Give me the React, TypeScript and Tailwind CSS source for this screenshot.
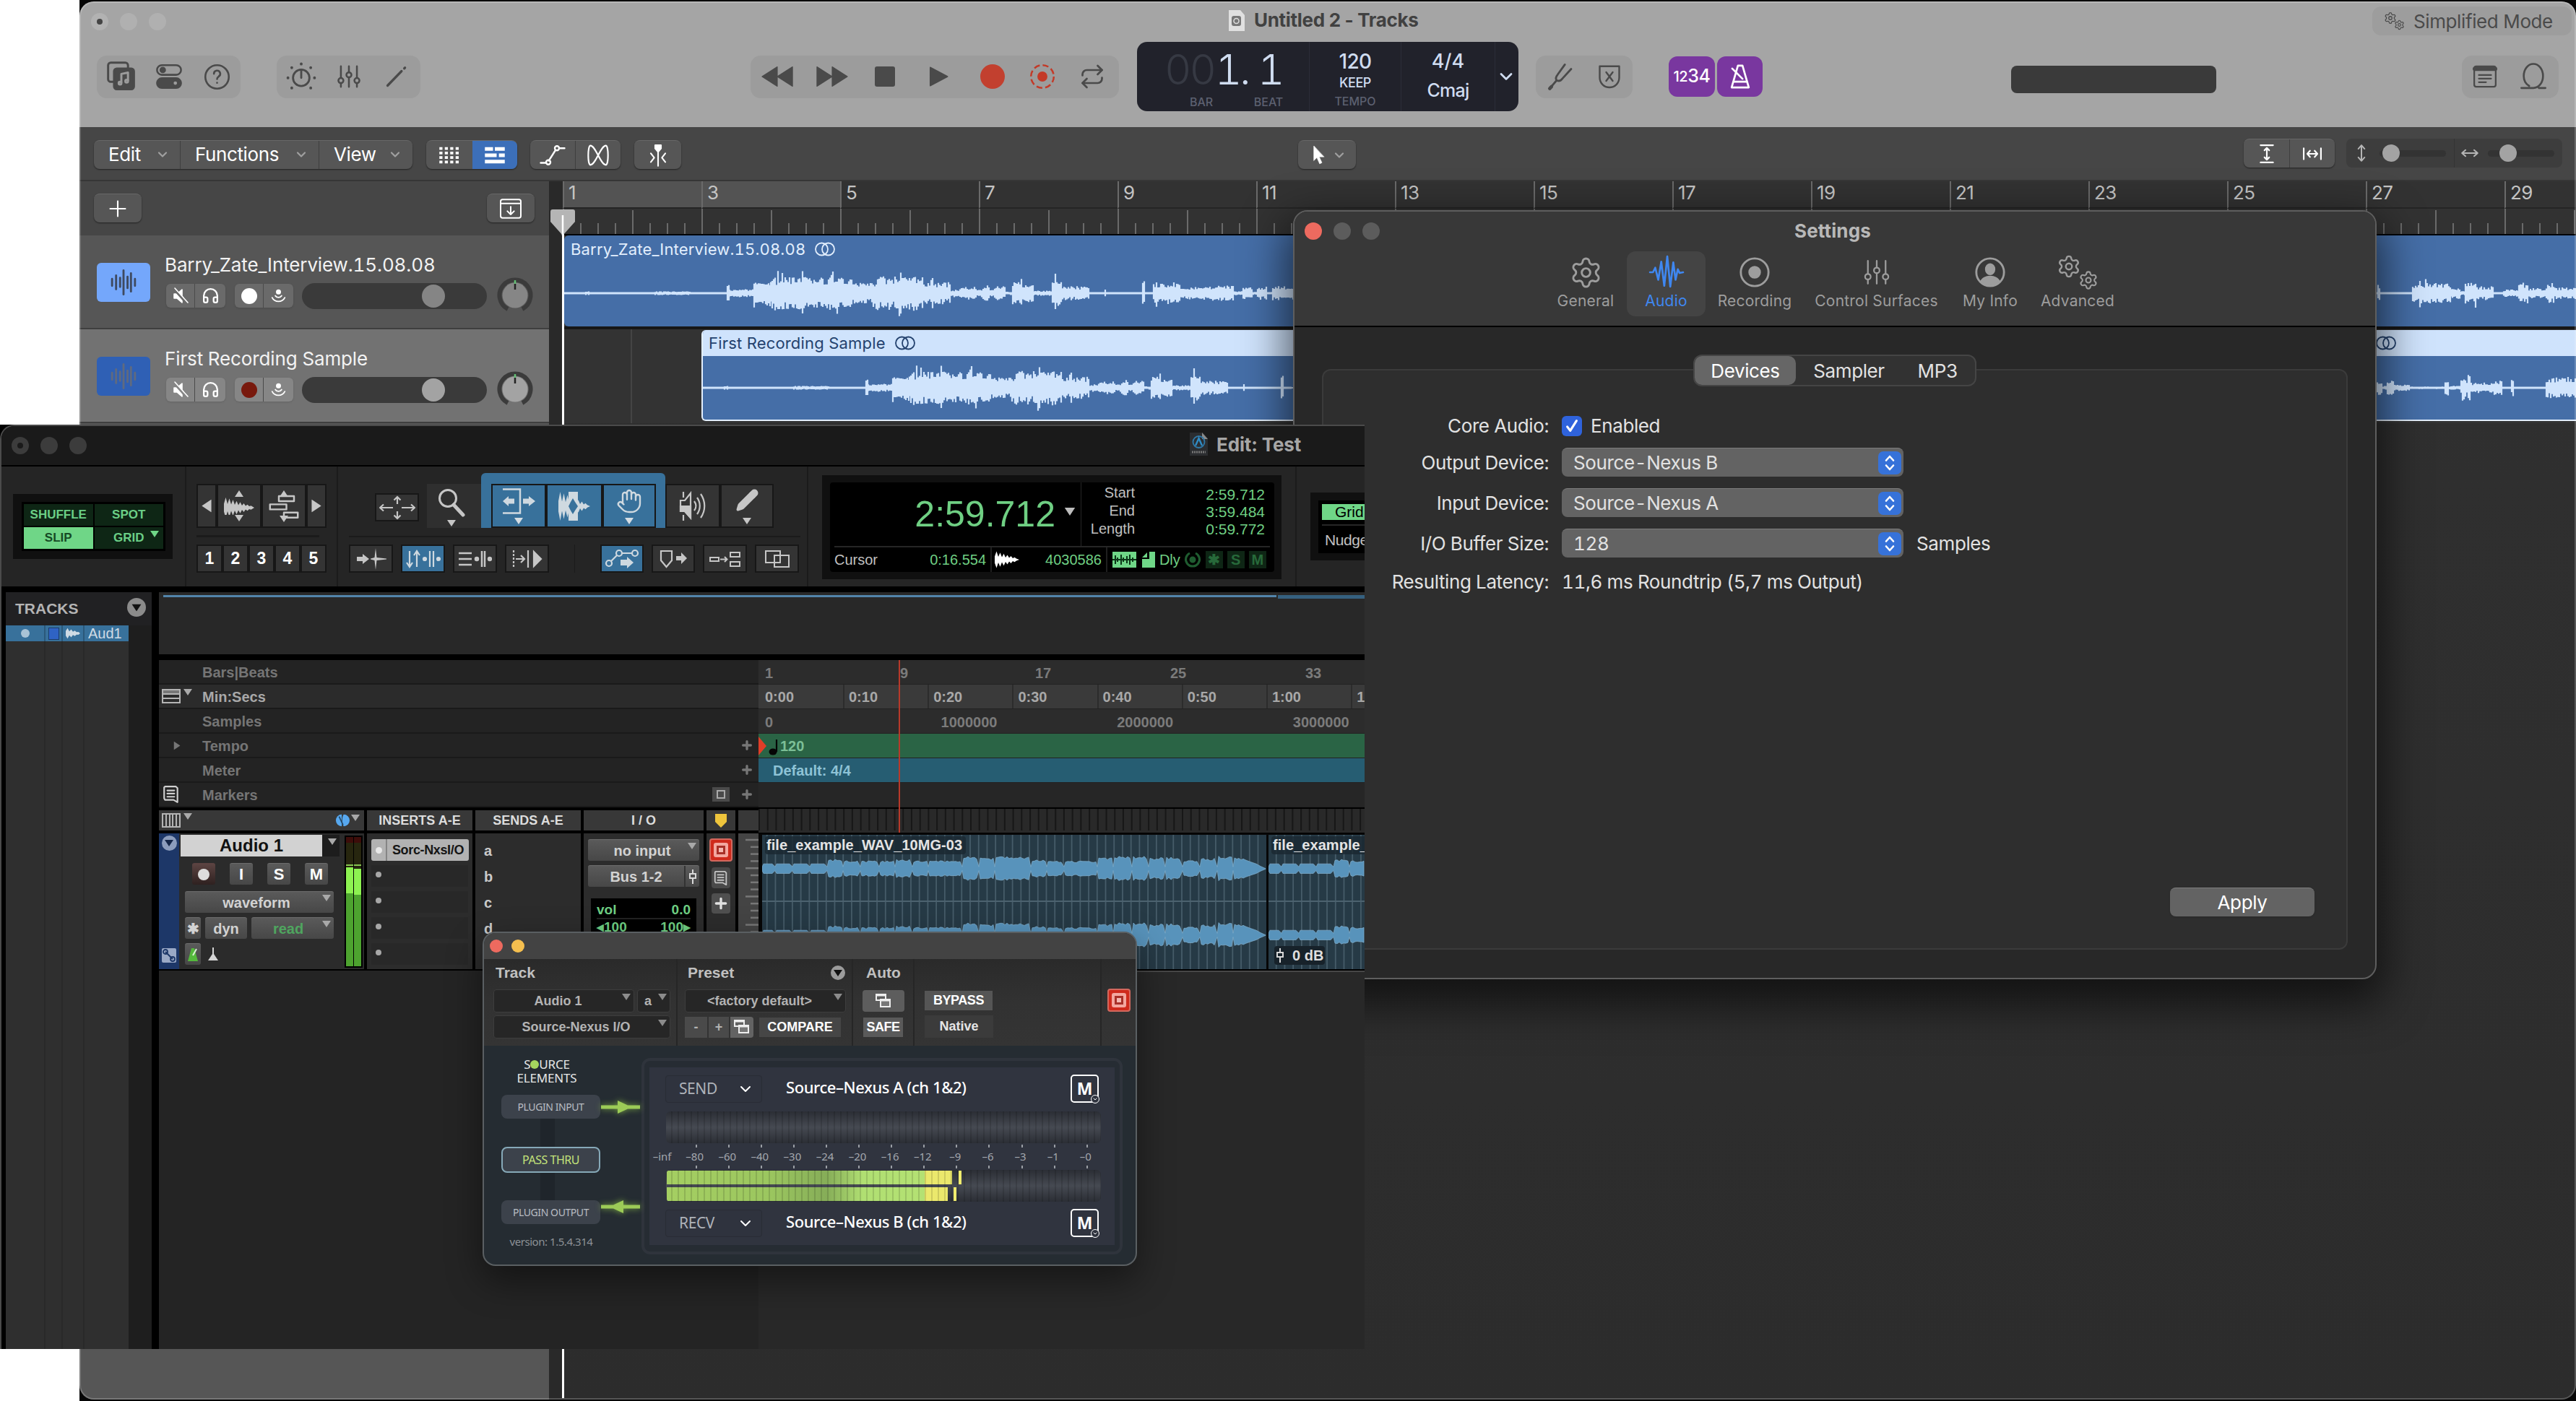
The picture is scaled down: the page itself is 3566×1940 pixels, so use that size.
import type { ReactNode } from "react";
import { clsx, type ClassValue } from "clsx";
import { ChevronDown, Hand, Headphones, Pencil, Repeat, Settings } from "lucide-react";
import { twMerge } from "tailwind-merge";

type Segment = [from: number, to: number, amp: number];

const cn = (...classes: ClassValue[]) => twMerge(clsx(classes));

const noise = (n: number) => {
  const v = Math.sin(n * 12.9898) * 43758.5453;
  return v - Math.floor(v);
};

/* ---------- small shared pieces ---------- */

function Glyph({
  size = 36,
  className,
  fill = "none",
  sw = 1.6,
  children,
}: {
  size?: number;
  className?: string;
  fill?: string;
  sw?: number;
  children: ReactNode;
}) {
  return (
    <svg
      width={size}
      height={size}
      viewBox="0 0 24 24"
      fill={fill}
      stroke="currentColor"
      strokeWidth={sw}
      strokeLinecap="round"
      strokeLinejoin="round"
      className={cn("shrink-0", className)}
    >
      {children}
    </svg>
  );
}

function Caret({ className }: { className?: string }) {
  return (
    <svg width="12" height="9" viewBox="0 0 12 9" className={cn("shrink-0 fill-[#a9a9a9]", className)}>
      <path d="M0 0h12L6 9z" />
    </svg>
  );
}

function Dot({ className }: { className?: string }) {
  return <span className={cn("block shrink-0 rounded-full", className)} />;
}

function Cell({ className, children }: { className?: string; children?: ReactNode }) {
  return <div className={cn("flex items-center justify-center", className)}>{children}</div>;
}

const slidersIcon = (
  <>
    <path d="M5 3v10M5 18v3M12 3v5M12 13v8M19 3v10M19 18v3" />
    <circle cx="5" cy="15.500" r="2.200" />
    <circle cx="12" cy="10.500" r="2.200" />
    <circle cx="19" cy="15.500" r="2.200" />
  </>
);

function TwoGears({ big, small }: { big: number; small: number }) {
  return (
    <span className="flex items-start">
      <Settings size={big} strokeWidth={1.7} />
      <Settings size={small} strokeWidth={1.8} className="-ml-1 mt-[38%]" />
    </span>
  );
}

/* ---------- Logic window ---------- */

function PillGroup({ className, children }: { className?: string; children: ReactNode }) {
  return (
    <div className={cn("flex h-[59px] items-center rounded-[14px] bg-[#9c9c9c] text-[#4a4a4a]", className)}>
      {children}
    </div>
  );
}

function LogicHeader() {
  return (
    <header className="h-[174px] bg-[#a5a5a5]">
      <div className="flex h-[50px]">
        <div className="flex w-[1589px] gap-4 pl-4 pt-4">
          <Cell className="size-6 rounded-full bg-[#b2b2b2]">
            <Dot className="size-2 bg-[#444]" />
          </Cell>
          <Dot className="size-6 bg-[#b0b0b0]" />
          <Dot className="size-6 bg-[#b0b0b0]" />
        </div>
        <div className="flex w-[1585px] gap-3 pt-[10px]">
          <svg width="25" height="29" viewBox="0 0 25 29" className="mt-[2px]">
            <path d="M2 0h16l6 7v22H2z" fill="#e0e0e0" />
            <rect x="6" y="8" width="13" height="14" rx="3" fill="#777" />
            <circle cx="12.500" cy="15" r="3.500" fill="none" stroke="#ddd" strokeWidth="1.500" />
          </svg>
          <span className="text-[26px] font-bold leading-8 tracking-[-0.012em] text-[#414141]">
            Untitled 2 - Tracks
          </span>
        </div>
        <div className="mt-[7px] flex h-10 w-[276px] items-center gap-3 rounded-xl bg-[#9d9d9d] pl-4 text-[#4a4a4a]">
          <TwoGears big={18} small={15} />
          <span className="whitespace-nowrap text-[26px] tracking-[-0.015em]">Simplified Mode</span>
        </div>
      </div>

      <div className="mt-[6px] flex h-24 items-center">
        <PillGroup className="ml-6 w-[199px]">
          <Cell className="w-[67px]">
            <Glyph size={44}>
              <rect x="2" y="1.500" width="15" height="14.500" rx="2" />
              <rect x="6.500" y="6" width="15" height="15.500" rx="2" fill="currentColor" />
              <path d="M12 16.500V10l5-1v6" stroke="#9c9c9c" />
              <circle cx="11" cy="17" r="1" stroke="#9c9c9c" />
              <circle cx="16" cy="15.500" r="1" stroke="#9c9c9c" />
            </Glyph>
          </Cell>
          <Cell className="w-[66px]">
            <Glyph size={38}>
              <rect x="1.500" y="2" width="21" height="8.500" rx="4.250" />
              <circle cx="6.500" cy="6.250" r="2" fill="currentColor" />
              <rect x="1.500" y="13.500" width="21" height="8.500" rx="4.250" fill="currentColor" />
              <circle cx="17.500" cy="17.750" r="2.300" fill="#9c9c9c" />
            </Glyph>
          </Cell>
          <Cell className="w-[66px]">
            <Glyph size={39}>
              <circle cx="12" cy="12" r="10" />
              <path d="M9.300 9.300a2.700 2.700 0 1 1 4 2.400c-1 .6-1.300 1.100-1.300 2.100M12 16.900v.1" />
            </Glyph>
          </Cell>
        </PillGroup>
        <PillGroup className="ml-[50px] w-[199px]">
          <Cell className="w-[67px]">
            <Glyph size={42}>
              <circle cx="12" cy="13" r="6.500" />
              <path d="M12 7v6" />
              <path
                d="M12 2v.1M4.500 4.900v.1M19.500 4.900v.1M1.500 13v.1M22.500 13v.1M4.500 21v.1M19.500 21v.1"
                strokeWidth="2.200"
              />
            </Glyph>
          </Cell>
          <Cell className="w-[66px]">
            <Glyph size={38}>{slidersIcon}</Glyph>
          </Cell>
          <Cell className="w-[66px]">
            <Glyph size={30} sw={2.600}>
              <path d="M2 22 17.500 6M20.500 3l.8-.8" />
            </Glyph>
          </Cell>
        </PillGroup>

        <PillGroup className="ml-[457px] w-[510px]">
          <Cell className="w-[74px]">
            <Glyph size={46} fill="currentColor" sw={0.6}>
              <path d="M12 5v14L1 12zM23 5v14L12 12z" />
            </Glyph>
          </Cell>
          <Cell className="w-[77px]">
            <Glyph size={46} fill="currentColor" sw={0.6}>
              <path d="M12 5v14l11-7zM1 5v14l11-7z" />
            </Glyph>
          </Cell>
          <Cell className="w-[69px]">
            <span className="block h-[28px] w-[28px] rounded-[3px] bg-[#4a4a4a]" />
          </Cell>
          <Cell className="w-[79px]">
            <Glyph size={34} fill="currentColor" sw={1}>
              <path d="M4 3v18l17-9z" />
            </Glyph>
          </Cell>
          <Cell className="w-[71px]">
            <Dot className="size-[34px] bg-[#c2402f]" />
          </Cell>
          <Cell className="w-[68px] text-[#c33a28]">
            <Glyph size={38}>
              <circle cx="12" cy="12" r="10" strokeDasharray="5.200 2.650" strokeLinecap="butt" />
              <circle cx="12" cy="12" r="3.600" fill="currentColor" />
            </Glyph>
          </Cell>
          <Cell className="w-[70px]">
            <Repeat size={36} strokeWidth={1.8} />
          </Cell>
        </PillGroup>

        <div className="ml-[25px] flex h-24 w-[528px] rounded-[14px] bg-[#21222b] text-[#cfdcf0]">
          <div className="w-[239px] border-r border-[#2b2d38]">
            <div className="flex h-[70px] items-end pl-[38px] text-[58px] font-light leading-[64px] tabular-nums">
              <span className="w-[70px] tracking-[-0.05em] text-[#363943]">00</span>
              <span className="w-[34px] text-center">1</span>
              <span className="w-[15px]">.</span>
              <span className="ml-[10px] w-[34px] text-center">1</span>
            </div>
            <div className="mt-[3px] flex text-[16px] font-medium leading-5 text-[#5c6070]">
              <span className="w-[178px] text-center">BAR</span>
              <span className="-ml-[18px] w-11 text-center">BEAT</span>
            </div>
          </div>
          <div className="flex w-[127px] flex-col items-center border-r border-[#2b2d38] pt-[9px] font-medium">
            <span className="text-[28px] leading-9 tracking-tight">120</span>
            <span className="text-[18px] leading-6 tracking-tight">KEEP</span>
            <span className="mt-[3px] text-[16px] leading-5 text-[#5c6070]">TEMPO</span>
          </div>
          <div className="flex w-[130px] flex-col items-center border-r border-[#2b2d38] pt-[9px] font-medium">
            <span className="text-[27px] leading-9">4/4</span>
            <span className="text-[25px] leading-[44px] tracking-[-0.03em]">Cmaj</span>
          </div>
          <Cell className="w-[30px]">
            <ChevronDown size={28} strokeWidth={2.4} />
          </Cell>
        </div>

        <PillGroup className="ml-6 w-[134px] justify-around">
          <Glyph size={42}>
            <path d="M3 21.500 8.500 15c-1-1.500-.5-3 .7-4.400L15 2.500M8.500 15c1.700.9 3.300.3 4.400-1.200L20 6" />
            <path d="m3 21.500 1.500-1.600" strokeWidth="2.600" />
          </Glyph>
          <Glyph size={36}>
            <path d="M3 2.500h18V13c0 5-4 9-9 9s-9-4-9-9z" />
            <path d="m9 8 6 8M15 8l-6 8" />
          </Glyph>
        </PillGroup>

        <div className="ml-[50px] flex gap-[3px] text-white">
          <Cell className="h-14 w-16 rounded-xl bg-[#79379f] font-medium tracking-tight">
            <span className="text-[20px]">12</span>
            <span className="text-[25px]">34</span>
          </Cell>
          <Cell className="h-14 w-[63px] rounded-xl bg-[#79379f]">
            <Glyph size={38} sw={1.7}>
              <path d="M10 2.500h4l5.500 19h-15zM6 16.500h12M14 14 5 5" />
            </Glyph>
          </Cell>
        </div>

        <div className="ml-[344px] mt-2 h-[38px] w-[284px] rounded-lg bg-[#3a3a3a]" />

        <PillGroup className="ml-[340px] w-[134px] justify-around">
          <Glyph size={34}>
            <rect x="1.500" y="2" width="21" height="20" rx="2" />
            <path d="M2 4.500h20" strokeWidth="4" />
            <path d="M6 10.500h12M6 14h12M6 17.500h7" />
          </Glyph>
          <Glyph size={40}>
            <path d="M8.500 19.800C5.500 18 4 15 4 11.500 4 6 7.500 1.500 12 1.500s8 4.500 8 10-3.500 10-8 10H2M16.500 21.500H22" />
          </Glyph>
        </PillGroup>
      </div>
    </header>
  );
}

function ToolButton({ className, children }: { className?: string; children: ReactNode }) {
  return (
    <div
      className={cn(
        "flex h-10 items-center justify-center rounded-lg border-t border-[#686868] bg-[#565656] text-white shadow-[0_1px_2px_rgba(0,0,0,0.5)]",
        className,
      )}
    >
      {children}
    </div>
  );
}

const menus = [
  { label: "Edit", width: "w-[119px]" },
  { label: "Functions", width: "w-[192px]" },
  { label: "View", width: "w-[130px]" },
];

function ZoomSlider({ vertical }: { vertical?: boolean }) {
  return (
    <div className={cn("flex flex-1 items-center pl-2", vertical && "border-r border-[#333]")}>
      <Glyph size={26} className={cn("text-[#b5b5b5]", !vertical && "rotate-90")} sw={1.8}>
        <path d="M12 2v20M8 6.500 12 2l4 4.500M8 17.500l4 4.500 4-4.500" />
      </Glyph>
      <div className="ml-3 flex h-[9px] w-[92px] items-center rounded-full bg-[#333]">
        <Dot className={cn("size-6 bg-[#a3a3a3]", vertical ? "ml-1" : "ml-4")} />
      </div>
    </div>
  );
}

function LogicMenuBar() {
  return (
    <div className="flex h-[75px] items-start border-b-2 border-[#363636] bg-[#464646] pt-[18px]">
      <ToolButton className="ml-5 w-[441px]">
        {menus.map((menu, i) => (
          <div
            key={menu.label}
            className={cn(
              "flex h-full items-center justify-between pb-[2px] pl-5 pr-[14px] text-[26px] tracking-[-0.015em]",
              i > 0 && "border-l border-[#3f3f3f]",
              menu.width,
            )}
          >
            {menu.label}
            <ChevronDown size={20} strokeWidth={2.6} className="text-[#a0a0a0]" />
          </div>
        ))}
      </ToolButton>
      <ToolButton className="ml-[19px] w-[126px] overflow-hidden">
        <Cell className="h-full w-16">
          <Glyph size={30} fill="currentColor" sw={0}>
            {[3, 8, 13, 18].flatMap((y) =>
              [1, 7, 13, 19].map((x) => <rect key={`${x}-${y}`} x={x} y={y} width="3.400" height="3" />),
            )}
          </Glyph>
        </Cell>
        <Cell className="h-full w-[62px] bg-[#3c6fb9]">
          <Glyph size={30} fill="currentColor" sw={0}>
            <path d="M1 3h9v4H1zM12 3h11v4H12zM1 10h13v4H1zM16.500 10H23v4h-6.500zM1 17h22v4H1z" />
          </Glyph>
        </Cell>
      </ToolButton>
      <ToolButton className="ml-[18px] w-[125px]">
        <Cell className="h-full w-[63px] border-r border-[#3f3f3f]">
          <Glyph size={36}>
            <path d="M1 19h5M8.500 17 14.500 7.500M18 5.500h5" />
            <circle cx="8" cy="18.500" r="2" />
            <circle cx="16" cy="5.500" r="2" />
          </Glyph>
        </Cell>
        <Cell className="h-full w-[62px]">
          <Glyph size={32}>
            <path d="M4 2c5.500 0 10.500 20 16 20 3 0 3-20 0-20-5.500 0-10.500 20-16 20C1 22 1 2 4 2z" />
          </Glyph>
        </Cell>
      </ToolButton>
      <ToolButton className="ml-[19px] w-[65px]">
        <Glyph size={32}>
          <path d="M12 8v15M4.500 10 8 14.500 4.500 19M19.500 10 16 14.500l3.500 4.500" />
          <path d="M9 1.500h6V5l-3 3.500L9 5z" fill="currentColor" />
        </Glyph>
      </ToolButton>
      <ToolButton className="ml-[854px] w-20 gap-2">
        <Glyph size={26} fill="currentColor" sw={0.5}>
          <path d="M8 0v19l4-4 3.500 8 3-1.500L15 14h6z" />
        </Glyph>
        <ChevronDown size={20} strokeWidth={2.6} className="text-[#a0a0a0]" />
      </ToolButton>
      <ToolButton className="-mt-[2px] ml-[1229px] w-[126px]">
        <Cell className="h-full w-[63px] border-r border-[#3f3f3f]">
          <Glyph size={26} sw={2}>
            <path d="M4 1h16M4 23h16M12 4.500v15M9 7.500l3-3 3 3M9 16.500l3 3 3-3" />
          </Glyph>
        </Cell>
        <Cell className="h-full w-[62px]">
          <Glyph size={26} sw={2} className="rotate-90">
            <path d="M5 1h14M5 23h14M12 5.500v13M8 9l4-3.500L16 9M8 15l4 3.500 4-3.500" />
          </Glyph>
        </Cell>
      </ToolButton>
      <div className="-mt-[2px] ml-4 flex h-10 w-[299px] rounded-lg bg-[#3d3d3d]">
        <ZoomSlider vertical />
        <ZoomSlider />
      </div>
    </div>
  );
}

function TrackHeader({ name, selected }: { name: string; selected?: boolean }) {
  const button = selected ? "bg-[#868686]" : "bg-[#6a6a6a]";
  return (
    <div
      className={cn("flex h-[130px] border-b-2 border-[#3f3f3f] pl-6", selected ? "bg-[#727272]" : "bg-[#565656]")}
    >
      <Cell className={cn("mt-[38px] h-[54px] w-[74px] rounded-md", selected ? "bg-[#2f60b5]" : "bg-[#74a7fb]")}>
        <Glyph size={38} sw={1.8} className={selected ? "text-[#5f6a80]" : "text-[#3e4a60]"}>
          <path d="M2 9v6M5.500 6v12M9 8v8M12 1.500v21M15.500 7v10M18.500 4v16M22 9v6" />
        </Glyph>
      </Cell>
      <div className="ml-5 w-[446px]">
        <div className="mt-6 whitespace-nowrap text-[26px] leading-[34px] tabular-nums tracking-[-0.005em] text-[#f2f2f2]">
          {name}
        </div>
        <div className="mt-[7px] flex h-[37px] items-center text-white">
          <div className={cn("ml-[2px] flex h-[33px] w-[82px] rounded-md shadow", button)}>
            <Cell className="w-10 border-r border-[#4a4a4a]">
              <Glyph size={24} fill="currentColor" sw={1.6}>
                <path d="M3 9h4l7-6v18l-7-6H3z" />
                <path d="m3 2 18 20" stroke={selected ? "#868686" : "#6a6a6a"} strokeWidth="4" />
                <path d="m4 1 18 20" />
              </Glyph>
            </Cell>
            <Cell className="w-[42px]">
              <Headphones size={25} strokeWidth={2.2} />
            </Cell>
          </div>
          <div className={cn("ml-[13px] flex h-[33px] w-[81px] rounded-md shadow", button)}>
            <Cell className="w-10 border-r border-[#4a4a4a]">
              <Dot className={cn("size-[22px]", selected ? "bg-[#78190d]" : "bg-white")} />
            </Cell>
            <Cell className="w-[41px]">
              <Glyph size={21} sw={2}>
                <circle cx="12" cy="6" r="3" fill="currentColor" />
                <path d="M7 12c2 3.500 8 3.500 10 0M2 15c4 8 16 8 20 0" />
              </Glyph>
            </Cell>
          </div>
          <div className="ml-3 flex h-9 w-[256px] items-center rounded-full bg-[#3a3a3a] pl-[166px]">
            <Dot className={cn("size-8", selected ? "bg-[#a3a3a3]" : "bg-[#858585]")} />
          </div>
        </div>
      </div>
      <div className="ml-[13px] mt-[57px]">
        <svg width="52" height="52" viewBox="0 0 52 52">
          <path d="M16 45A21.500 21.500 0 1 1 36 45" fill="none" stroke="#3b3b3b" strokeWidth="6" />
          <circle cx="26" cy="26" r="17.500" fill={selected ? "#a3a3a3" : "#868686"} />
          <path d="M26 10v8" stroke="#222" strokeWidth="2.500" />
          <path d="M26 5v5" stroke="#63c074" strokeWidth="2.500" />
        </svg>
      </div>
    </div>
  );
}

// x offsets are relative to the start of the recording
const interviewWave: Segment[] = [
  [0, 30, 1],
  [30, 36, 3],
  [36, 126, 1],
  [126, 176, 3],
  [176, 226, 1],
  [226, 229, 16],
  [229, 263, 6],
  [263, 286, 20],
  [286, 350, 25],
  [350, 400, 24],
  [400, 432, 17],
  [432, 494, 26],
  [494, 536, 17],
  [536, 550, 6],
  [550, 572, 10],
  [572, 580, 6],
  [580, 590, 12],
  [590, 596, 5],
  [596, 612, 11],
  [612, 621, 3],
  [621, 635, 17],
  [635, 650, 14],
  [650, 676, 4],
  [676, 690, 22],
  [690, 728, 11],
  [728, 749, 1],
  [749, 751, 8],
  [751, 801, 1],
  [801, 804, 24],
  [804, 816, 1],
  [816, 853, 17],
  [853, 864, 9],
  [864, 882, 11],
  [882, 928, 12],
  [928, 940, 3],
  [940, 954, 10],
  [954, 960, 3],
  [960, 974, 10],
  [974, 981, 2],
  [981, 1010, 11],
];

const interviewTail: Segment[] = [
  [2500, 2511, 1],
  [2511, 2515, 14],
  [2515, 2559, 1],
  [2559, 2612, 16],
  [2612, 2625, 9],
  [2625, 2632, 4],
  [2632, 2650, 16],
  [2650, 2672, 11],
  [2672, 2685, 2],
  [2685, 2706, 6],
  [2706, 2720, 16],
  [2720, 2746, 8],
  [2746, 2756, 16],
  [2756, 2788, 9],
];

const sampleTail: Segment[] = [
  [2316, 2326, 12],
  [2326, 2332, 3],
  [2332, 2342, 12],
  [2342, 2364, 5],
  [2364, 2412, 2],
  [2412, 2418, 12],
  [2418, 2434, 3],
  [2434, 2448, 14],
  [2448, 2476, 8],
  [2476, 2492, 11],
  [2492, 2504, 1],
  [2504, 2507, 13],
  [2507, 2552, 1],
  [2552, 2600, 16],
];

function barsPath(segments: Segment[], mid: number) {
  let d = "";
  for (const [from, to, amp] of segments) {
    for (let x = from; x < to; x += 2) {
      const spike = amp > 12 && noise(x) > 0.88 ? 1.45 : 1;
      const up = Math.max(1.5, amp * (0.45 + 0.45 * noise(x + 3)) * spike);
      const down = Math.max(1.5, amp * (0.45 + 0.45 * noise(x + 11)) * spike);
      d += `M${x} ${(mid - up).toFixed(1)}V${(mid + down).toFixed(1)}`;
    }
  }
  return d;
}

function LogicWave({ segments }: { segments: Segment[] }) {
  return (
    <svg width="2790" height="88" className="block shrink-0">
      <path d={barsPath(segments, 44)} stroke="#d0e4fc" strokeWidth="2.200" fill="none" />
      <path d="M0 44H2790" stroke="#d0e4fc" strokeWidth="2" />
    </svg>
  );
}

function Loop({ className }: { className?: string }) {
  return (
    <svg width="30" height="20" viewBox="0 0 30 20" className={className} fill="none" stroke="currentColor" strokeWidth="1.800">
      <circle cx="10.500" cy="10" r="8.500" />
      <circle cx="19.500" cy="10" r="8.500" />
    </svg>
  );
}

function Ruler() {
  const bars = Array.from({ length: 15 }, (_, i) => i * 2 + 1);
  return (
    <div className="flex h-[75px] overflow-hidden border-b-2 border-black bg-[#323232]">
      {bars.map((bar) => (
        <div key={bar} className="h-full w-48 shrink-0">
          <div
            className={cn(
              "h-[38px] border-b-2 border-l-2 border-[#252525] border-l-[#6a6a6a] pl-[6px] text-[26px] leading-[31px] tracking-[-0.02em] text-[#c4c4c4]",
              bar < 5 && "bg-[#535353]",
            )}
          >
            {bar}
          </div>
          <svg width="192" height="35" className="block">
            {Array.from({ length: 8 }, (_, t) => (
              <path
                key={t}
                d={t === 0 ? "M1 0V35" : t === 4 ? "M97 2V35" : `M${t * 24 + 1} 20V35`}
                stroke="#6a6a6a"
                strokeWidth="2"
              />
            ))}
          </svg>
        </div>
      ))}
    </div>
  );
}

function LogicWindow() {
  return (
    <section className="absolute left-[110px] top-0 h-[1940px] w-[3456px] bg-[#060606] pt-[2px]">
      <div className="relative h-[1936px] overflow-hidden rounded-[20px] bg-[#2e2e2e]">
        <LogicHeader />
        <LogicMenuBar />
        <div className="flex h-[1687px]">
          <div className="w-[650px] shrink-0 bg-[#565656]">
            <div className="flex h-[75px] justify-between bg-[#464646] px-5 pt-[17px]">
              <ToolButton className="w-[66px]">
                <Glyph size={28} sw={1.8}>
                  <path d="M12 3v18M3 12h18" />
                </Glyph>
              </ToolButton>
              <ToolButton className="w-[66px]">
                <Glyph size={32} sw={1.5}>
                  <rect x="1.500" y="2.500" width="21" height="19" rx="2" />
                  <path d="M2 6.500h20M12 10v8M8.500 14.500 12 18l3.500-3.500" />
                </Glyph>
              </ToolButton>
            </div>
            <TrackHeader name="Barry_Zate_Interview.15.08.08" />
            <TrackHeader name="First Recording Sample" selected />
          </div>
          <div className="w-[19px] shrink-0 bg-[#292929]" />
          <div className="w-[2787px] overflow-hidden bg-gradient-to-b from-[#303030] to-[#2c2c2c]">
            <Ruler />
            <div className="flex h-[130px] flex-col border-b-4 border-[#161616] pl-[2px]">
              <div className="h-[126px] overflow-hidden rounded-l-md bg-[#456ea7]">
                <div className="flex h-[36px] items-center gap-3 pl-[9px] pt-[2px] text-[#e2eefd]">
                  <span className="text-[22px] tabular-nums tracking-[0.008em]">Barry_Zate_Interview.15.08.08</span>
                  <Loop />
                </div>
                <LogicWave segments={[...interviewWave, ...interviewTail]} />
              </div>
            </div>
            <div className="flex h-[130px] bg-[#333]">
              <div className="w-24 border-r-2 border-[#444]" />
              <div className="w-24" />
              <div className="mt-[1px] h-[126px] w-[2595px] overflow-hidden rounded-l-md border-b-2 border-l-2 border-[#e3effd] bg-[#456ea7]">
                <div className="flex h-[36px] items-center gap-3 bg-[#cfe3fc] pl-[8px] text-[#24426e]">
                  <span className="text-[22px] tracking-[0.008em]">First Recording Sample</span>
                  <Loop />
                  <Loop className="ml-[2008px]" />
                </div>
                <LogicWave segments={[...interviewWave.slice(0, 30), ...sampleTail]} />
              </div>
            </div>
          </div>
        </div>
        {/* playhead */}
        <div className="absolute left-[668px] top-[292px] h-[1642px] w-[3px] bg-white" />
        <svg width="34" height="36" viewBox="0 0 34 36" className="absolute left-[652px] top-[288px]">
          <path d="M3 0h28q3 0 3 3v14L17 36 0 17V3q0-3 3-3z" fill="#b5b5b5" />
          <path d="M17 8v28" stroke="#fff" strokeWidth="2.500" />
        </svg>
        <div className="pointer-events-none absolute inset-0 rounded-[20px] border-2 border-white/20" />
      </div>
    </section>
  );
}

/* ---------- Settings window ---------- */

const settingsTabs = [
  { label: "General", width: "w-[114px]", icon: <Settings size={47} strokeWidth={1.5} /> },
  {
    label: "Audio",
    width: "w-[109px]",
    icon: (
      <Glyph size={50} sw={1.3}>
        <path d="M1 12h2l1.500-3L6.500 17 8.500 5l2 16L12.500 1.500l2 20 2-16L18 17l1.500-7 1.200 2.500L23 12" />
      </Glyph>
    ),
  },
  {
    label: "Recording",
    width: "w-[136px]",
    icon: (
      <Glyph size={46} sw={1.5}>
        <circle cx="12" cy="12" r="10" />
        <circle cx="12" cy="12" r="3.800" fill="currentColor" />
      </Glyph>
    ),
  },
  { label: "Control Surfaces", width: "w-[201px]", icon: <Glyph size={42} sw={1.3}>{slidersIcon}</Glyph> },
  {
    label: "My Info",
    width: "w-[114px]",
    icon: (
      <Glyph size={46} sw={1.5}>
        <circle cx="12" cy="12" r="10" />
        <ellipse cx="12" cy="9.800" rx="3" ry="3.600" fill="currentColor" />
        <path d="M5.500 19c1.500-5 11.500-5 13 0-3 3.500-10 3.500-13 0z" fill="currentColor" />
      </Glyph>
    ),
  },
  { label: "Advanced", width: "w-[128px]", icon: <TwoGears big={34} small={28} /> },
];

function Select({ value }: { value: string }) {
  return (
    <div className="flex h-10 w-[473px] items-center justify-between rounded-lg border-t border-[#7d7d7d] bg-[#636363] pl-4 pr-[3px]">
      {value}
      <Cell className="h-8 w-8 rounded-[7px] bg-[#3672d9] text-white">
        <Glyph size={24} sw={2.6}>
          <path d="m7 8.500 5-5.500 5 5.500M7 15.500l5 5.500 5-5.500" />
        </Glyph>
      </Cell>
    </div>
  );
}

function FormRow({ label, className, children }: { label: string; className?: string; children: ReactNode }) {
  return (
    <div className={cn("flex items-center", className)}>
      <div className="mr-[18px] w-[312px] text-right">{label}</div>
      {children}
    </div>
  );
}

function SettingsWindow() {
  return (
    <section className="absolute left-[1790px] top-[291px] h-[1065px] w-[1500px] overflow-hidden rounded-[20px] border-2 border-[#5e5e5e] bg-[#282828] text-[#e2e2e2] shadow-[0_24px_60px_10px_rgba(0,0,0,0.6)]">
      <header className="h-[160px] border-b-2 border-black bg-[#383838]">
        <div className="flex h-[53px] items-center">
          <div className="flex gap-4 pl-[14px]">
            <Dot className="size-6 bg-[#ed6a5f]" />
            <Dot className="size-6 bg-[#5c5c5c]" />
            <Dot className="size-6 bg-[#5c5c5c]" />
          </div>
          <div className="ml-[574px] text-[26px] font-bold tracking-[0.005em] text-[#b8b8b8]">Settings</div>
        </div>
        <nav className="flex pl-[346px] pt-[2px]">
          {settingsTabs.map((tab) => (
            <div
              key={tab.label}
              className={cn(
                "flex h-[90px] flex-col items-center justify-end rounded-xl pb-[7px]",
                tab.width,
                tab.label === "Audio" ? "bg-[#444] text-[#3f87f0]" : "text-[#9d9d9d]",
              )}
            >
              <Cell className="h-[52px]">{tab.icon}</Cell>
              <span className="whitespace-nowrap text-[21px] leading-7 tracking-[0.01em]">{tab.label}</span>
            </div>
          ))}
        </nav>
      </header>

      <div className="mx-[38px] mt-[58px] h-[804px] rounded-xl border-2 border-[#3b3b3b] bg-[#2e2e2e] text-[26px] tabular-nums tracking-[-0.015em]">
        <div className="-mt-[22px] ml-[512px] flex h-11 w-[392px] items-center rounded-xl border-2 border-[#454545] bg-[#323232]">
          <Cell className="h-10 w-[140px] rounded-[10px] bg-[#666] text-white">Devices</Cell>
          <Cell className="w-[147px]">Sampler</Cell>
          <Cell className="w-[99px]">MP3</Cell>
        </div>
        <FormRow label="Core Audio:" className="mt-[35px]">
          <Cell className="size-7 rounded-md bg-[#2f63dc] text-white">
            <Glyph size={22} sw={3.4}>
              <path d="m5 13 4.500 6L19 4" />
            </Glyph>
          </Cell>
          <span className="ml-3">Enabled</span>
        </FormRow>
        <FormRow label="Output Device:" className="mt-[11px]">
          <Select value="Source-Nexus B" />
        </FormRow>
        <FormRow label="Input Device:" className="mt-4">
          <Select value="Source-Nexus A" />
        </FormRow>
        <FormRow label="I/O Buffer Size:" className="mt-4">
          <Select value="128" />
          <span className="ml-[18px]">Samples</span>
        </FormRow>
        <FormRow label="Resulting Latency:" className="mt-[14px]">
          11,6 ms Roundtrip (5,7 ms Output)
        </FormRow>
        <div className="mr-[44px] mt-[404px] flex justify-end">
          <Cell className="h-10 w-[200px] rounded-lg border-t border-[#7d7d7d] bg-[#636363] text-white shadow">
            Apply
          </Cell>
        </div>
      </div>
    </section>
  );
}

/* ---------- Pro Tools window ---------- */

function PtButton({ active, className, children }: { active?: boolean; className?: string; children: ReactNode }) {
  return (
    <div
      className={cn(
        "flex items-center justify-center border-2 border-[#171717] text-[#c6c6c6]",
        active ? "bg-[#38719b]" : "bg-[#343434]",
        className,
      )}
    >
      {children}
    </div>
  );
}

// jagged burst that fades out to the right
function miniWave(width: number, mid: number) {
  const step = 2.5;
  const pts = Array.from({ length: Math.floor(width / step) }, (_, i) => {
    const fade = 1 - (i * step) / width;
    return (mid - 1) * fade * (i % 2 ? 1 : 0.3) + 1.2;
  });
  const top = pts.map((a, i) => `L${i * step} ${mid - a}`).join("");
  const bottom = pts.map((a, i) => `L${i * step} ${mid + a}`).reverse().join("");
  return `M0 ${mid}${top}L${width} ${mid}${bottom}z`;
}

function MiniWave({ width, height, className }: { width: number; height: number; className?: string }) {
  return (
    <svg width={width} height={height} className={className} fill="currentColor">
      <path d={miniWave(width, height / 2)} />
    </svg>
  );
}

function NavCell({ children }: { children: ReactNode }) {
  return (
    <PtButton className="h-full w-[62px] flex-col justify-between py-[7px]">
      <Caret className="rotate-180 fill-[#c6c6c6]" />
      {children}
      <Caret className="fill-[#c6c6c6]" />
    </PtButton>
  );
}

function ProToolsToolbar() {
  return (
    <div className="flex h-[166px] bg-[#252525] font-['Liberation_Sans',Arial,sans-serif]">
      <div className="w-[254px]">
        <div className="ml-4 mt-[38px] h-[90px] w-[221px] bg-[#101010] pl-3 pt-[11px]">
          <div className="grid h-[68px] w-[199px] grid-cols-2 gap-[2px] bg-black p-[3px] text-[17px] font-bold text-[#6bcf86]">
            <Cell className="bg-[#0e2615]">SHUFFLE</Cell>
            <Cell className="bg-[#0e2615]">SPOT</Cell>
            <Cell className="bg-[#6fd687] text-[#164a25]">SLIP</Cell>
            <Cell className="gap-2 bg-[#0e2615] pl-5">
              GRID
              <Caret className="-mt-3 fill-[#6fd687]" />
            </Cell>
          </div>
        </div>
      </div>

      <div className="w-[210px] border-l-2 border-[#1b1b1b] pl-[14px] pt-6">
        <div className="flex h-[61px] w-[180px]">
          <PtButton className="w-[28px]">
            <Caret className="rotate-90 scale-150 fill-[#c6c6c6]" />
          </PtButton>
          <NavCell>
            <MiniWave width={42} height={30} />
          </NavCell>
          <NavCell>
            <Glyph size={42} sw={1.4} className="-my-2">
              <path d="M8 4h12v4H8zM1 10.500h13v4H1zM12 17h11v4H12z" />
            </Glyph>
          </NavCell>
          <PtButton className="w-[28px]">
            <Caret className="-rotate-90 scale-150 fill-[#c6c6c6]" />
          </PtButton>
        </div>
        <div className="mt-[10px] h-[3px] w-[170px] bg-[#1b1b1b]" />
        <div className="mt-[10px] flex h-[39px] w-[180px] text-[23px] font-bold">
          {[1, 2, 3, 4, 5].map((n) => (
            <PtButton key={n} className="w-9 text-white">
              {n}
            </PtButton>
          ))}
        </div>
      </div>

      <div className="w-[651px] border-l-2 border-[#1b1b1b]">
        <div className="flex h-[85px] items-end">
          <PtButton className="mb-[9px] ml-[51px] h-[39px] w-[61px]">
            <svg width="50" height="34" viewBox="0 0 50 34" fill="none" stroke="currentColor" strokeWidth="2.200">
              <path d="M1 17h18M31 17h18M6 12.500 1 17l5 4.500M44 12.500l5 4.500-5 4.500M25 2v10M25 22v10M20.500 6.500 25 2l4.500 4.500M20.500 27.500 25 32l4.500-4.500" />
            </svg>
          </PtButton>
          <div className="ml-[11px] flex h-[61px] w-[75px] flex-col items-center bg-[#2f2f2f] pr-2 pt-[6px] text-[#c6c6c6]">
            <svg width="40" height="40" viewBox="0 0 40 40" fill="none" stroke="currentColor">
              <circle cx="15" cy="14" r="11.500" strokeWidth="3" />
              <path d="m23 23 13 14" strokeWidth="5" strokeLinecap="round" />
            </svg>
            <Caret className="mt-1 fill-[#c6c6c6]" />
          </div>
          <div className="flex h-[76px] w-[255px] items-end rounded-t-md bg-[#38719b] pl-[14px]">
            <PtButton active className="h-[61px] w-[76px] flex-col">
              <svg width="48" height="36" viewBox="0 0 48 36" fill="none" stroke="#cfd9e0" strokeWidth="2.500">
                <path d="M2 1.500h24v33H2" />
                <path d="M18 18h-9M30 18h9" strokeWidth="7" />
                <path d="M10 11 2 18l8 7zM38 11l9 7-9 7z" fill="#cfd9e0" stroke="none" />
              </svg>
              <Caret className="mt-[5px] fill-[#d5dde3]" />
            </PtButton>
            <PtButton active className="h-[61px] w-[78px]">
              <svg width="44" height="42" viewBox="0 0 44 42" fill="#cfd9e0">
                <path d={miniWave(44, 21)} />
                <path d="M14 1h13v40H14z" />
                <path d="m14 21 3-6 3-5 3 5 4 6-4 6-3 5-3-5z" fill="#38719b" />
              </svg>
            </PtButton>
            <PtButton active className="h-[61px] w-[74px] flex-col text-[#cfd9e0]">
              <Hand size={36} strokeWidth={1.6} />
              <Caret className="mt-[5px] fill-[#d5dde3]" />
            </PtButton>
          </div>
          <PtButton className="h-[61px] w-[76px]">
            <svg width="38" height="44" viewBox="0 0 38 44" fill="none" stroke="currentColor" strokeWidth="2.200">
              <path d="M6 2v8M6 34v8M2 14h6l8-10v34l-8-9H2z" />
              <path d="M2 22h14v16l-8-9H2z" fill="currentColor" />
              <path d="M21 15c3 4 3 9 0 13M25 10c5 7 5 16 0 23M30 5c7 10 7 23 0 33" />
            </svg>
          </PtButton>
          <PtButton className="h-[61px] w-[74px] flex-col">
            <Pencil size={33} strokeWidth={1.8} fill="currentColor" />
            <Caret className="mt-[8px] fill-[#c6c6c6]" />
          </PtButton>
        </div>
        <div className="ml-[15px] mt-[11px] h-[2px] w-[625px] bg-[#1b1b1b]" />
        <div className="ml-[15px] mt-[10px] flex h-[39px] gap-[11px]">
          <PtButton className="w-[61px]">
            <svg width="42" height="30" viewBox="0 0 42 30" fill="currentColor">
              <path d="M1 12h8V8l9 7-9 7v-4H1zM27 0l1.500 13 13.500 1.500v1L28.500 17 27 30l-1.500-13L20 15.500v-1l5.500-1.500z" />
            </svg>
          </PtButton>
          <PtButton active className="w-[61px]">
            <svg width="48" height="28" viewBox="0 0 48 28" fill="none" stroke="#cfd9e0" strokeWidth="2.200">
              <path d="M5 3v22M1 19l4 6 4-6M15 25V3M11 9l4-6 4 6M33 3v22M38 3v22" />
              <circle cx="26" cy="14" r="2" fill="#cfd9e0" />
              <circle cx="45" cy="14" r="2" fill="#cfd9e0" />
            </svg>
          </PtButton>
          <PtButton className="w-[61px]">
            <svg width="46" height="28" viewBox="0 0 46 28" fill="none" stroke="currentColor" strokeWidth="2.500">
              <path d="M0 6h18M0 14h18M0 22h18M32 3v22M36 3v22" />
              <circle cx="25" cy="14" r="2" fill="currentColor" />
              <circle cx="43" cy="14" r="2" fill="currentColor" />
            </svg>
          </PtButton>
          <PtButton className="w-[61px]">
            <svg width="42" height="28" viewBox="0 0 42 28" fill="none" stroke="currentColor" strokeWidth="2.200">
              <path d="M2 2v24" strokeDasharray="3 2" />
              <path d="M5 14h11M12 9l5 5-5 5M22 2v24" />
              <path d="M30 4v20l10-10z" fill="currentColor" />
            </svg>
          </PtButton>
          <div className="mx-[24px] w-[1px] bg-[#1b1b1b]" />
          <PtButton active className="w-[60px]">
            <svg width="48" height="30" viewBox="0 0 48 30" fill="none" stroke="#cfd9e0" strokeWidth="2.200">
              <circle cx="6" cy="21" r="4" />
              <circle cx="20" cy="7" r="4" />
              <circle cx="42" cy="7" r="4" />
              <path d="m9 18 8-8M24 7h14" />
              <path d="M22 16h9v-4l9 8-9 8v-4h-9z" fill="#cfd9e0" stroke="none" />
            </svg>
          </PtButton>
          <PtButton className="w-[60px]">
            <svg width="38" height="26" viewBox="0 0 38 26" fill="none" stroke="currentColor" strokeWidth="2.200">
              <path d="M2 2h15v13l-7.500 9L2 15z" />
              <path d="M23 9h7V4l8 8-8 8v-5h-7z" fill="currentColor" stroke="none" />
            </svg>
          </PtButton>
          <PtButton className="w-[61px]">
            <svg width="44" height="26" viewBox="0 0 44 26" fill="none" stroke="currentColor" strokeWidth="2">
              <path d="M1 11h12v5H1zM15 13.500h9M21 10l3.500 3.500L21 17M29 4h13v6H29zM29 17h13v6H29z" />
            </svg>
          </PtButton>
          <PtButton className="w-[61px]">
            <svg width="36" height="28" viewBox="0 0 36 28" fill="none" stroke="currentColor" strokeWidth="2">
              <path d="M2 3h20v16H2z" />
              <path d="M14 9h20v16H14z" />
            </svg>
          </PtButton>
        </div>
      </div>

      <div className="w-[676px] border-l-2 border-[#1b1b1b] pl-[19px] pt-3">
        <div className="h-[144px] w-[636px] bg-[#101010] pl-[11px] pt-[10px]">
          <div className="h-[124px] w-[615px] rounded bg-black px-[6px] text-[#c0c0c0]">
            <div className="flex h-[90px] border-b-2 border-[#262626]">
              <div className="flex w-[342px] items-center justify-end border-r border-[#262626] pr-[9px]">
                <span className="text-[50px] text-[#6fcf83]">2:59.712</span>
                <Caret className="mb-2 ml-[14px] scale-[1.2] fill-[#bdbdbd]" />
              </div>
              <div className="w-[74px] pt-[2px] text-right text-[20px] leading-[25px]">
                <div>Start</div>
                <div>End</div>
                <div>Length</div>
              </div>
              <div className="w-[180px] pt-[5px] text-right text-[21px] leading-6 text-[#6fcf83]">
                <div>2:59.712</div>
                <div>3:59.484</div>
                <div>0:59.772</div>
              </div>
            </div>
            <div className="flex h-[34px] items-center text-[20px]">
              <span>Cursor</span>
              <span className="ml-[72px] w-[78px] text-right text-[#6fcf83]">0:16.554</span>
              <span className="ml-[6px] h-full w-[2px] bg-[#1f1f1f]" />
              <MiniWave width={34} height={24} className="ml-[4px] text-white" />
              <span className="ml-[36px] text-[#6fcf83]">4030586</span>
              <span className="ml-[6px] h-full w-[2px] bg-[#1f1f1f]" />
              <svg width="33" height="22" viewBox="0 0 33 22" className="ml-[7px]">
                <rect width="33" height="22" fill="#6fd687" />
                <path d="M0 11h33M4 5v12M7 8v6M12 4v14M15 8v6M20 6v10M24 4v14M28 8v6" stroke="#0b3517" strokeWidth="2" />
              </svg>
              <svg width="18" height="22" viewBox="0 0 18 22" className="ml-[8px]">
                <path d="M10 0h8v22H0V10h10z" fill="#6fd687" />
                <path d="M7 1v7H0z" fill="#6fd687" />
              </svg>
              <span className="ml-[6px] text-[#6fcf83]">Dly</span>
              <svg width="24" height="24" viewBox="0 0 24 24" className="ml-[5px]" fill="none" stroke="#1f5c30" strokeWidth="3">
                <path d="M8 3a9.500 9.500 0 1 0 8 0" />
                <circle cx="12" cy="12" r="3" fill="#1f5c30" />
              </svg>
              {["✱", "S", "M"].map((s) => (
                <Cell key={s} className="ml-[6px] h-6 w-6 bg-[#0e2615] font-bold text-[#27693a]">
                  {s}
                </Cell>
              ))}
            </div>
          </div>
        </div>
      </div>

      <div className="w-[96px] border-l-2 border-[#1b1b1b] pl-[19px] pt-9">
        <div className="h-[94px] bg-[#101010] pl-[11px] pt-[11px]">
          <div className="h-[73px] overflow-hidden bg-black pl-[5px] pt-[5px] text-[21px] text-[#c0c0c0]">
            <div className="h-[22px] overflow-hidden bg-[#6fd687] pl-[18px] leading-[22px] text-black">Grid</div>
            <div className="mt-[6px] h-[2px] bg-[#262626]" />
            <div className="ml-1 mt-1 tracking-[-0.02em]">Nudge</div>
          </div>
        </div>
      </div>
    </div>
  );
}

function TrackList() {
  return (
    <div className="flex w-[202px] flex-col bg-[#1e1e1e]">
      <div className="flex h-[46px] items-center justify-between bg-[#212123] pl-[13px] pr-[8px]">
        <span className="text-[21px] font-bold text-[#b4b4b4]">TRACKS</span>
        <Cell className="-mt-1 size-[26px] rounded-full bg-[#8b8b8b]">
          <Caret className="scale-110 fill-[#111]" />
        </Cell>
      </div>
      <div className="flex h-[22px] w-[170px] bg-[#38719b] text-[20px] leading-[22px] text-[#cfdbe4]">
        <Cell className="w-[55px] border-r-2 border-[#2b587a]">
          <Dot className="size-3 bg-[#a9c3d6]" />
        </Cell>
        <Cell className="w-[24px] border-r-2 border-[#2b587a]">
          <span className="h-[17px] w-[15px] border border-[#1b3c6b] bg-[#2f63c4]" />
        </Cell>
        <Cell className="w-[30px] border-r-2 border-[#2b587a]">
          <MiniWave width={20} height={16} />
        </Cell>
        <span className="pl-[5px]">Aud1</span>
      </div>
      <div className="flex w-[170px] flex-1 bg-[#2f2f2f]">
        <div className="w-[55px] border-r-2 border-[#292929]" />
        <div className="w-[24px] border-r-2 border-[#292929]" />
        <div className="w-[30px] border-r-2 border-[#292929]" />
      </div>
    </div>
  );
}

function RulerRow({
  label,
  active,
  icon,
  tail,
  children,
}: {
  label: string;
  active?: boolean;
  icon?: ReactNode;
  tail?: ReactNode;
  children?: ReactNode;
}) {
  return (
    <div className="flex h-[34px] text-[20px] font-bold">
      <div
        className={cn(
          "flex w-[830px] items-center border-b-2 border-[#1a1a1a]",
          active ? "bg-[#2b2b2b] text-[#a8a8a8]" : "bg-[#232323] text-[#757575]",
        )}
      >
        <div className="flex w-[60px] items-center pl-1">{icon}</div>
        <span className="flex-1 pt-[2px]">{label}</span>
        <div className="flex items-center gap-[16px] pr-2">{tail}</div>
      </div>
      <div
        className={cn(
          "flex w-[839px] items-center overflow-hidden whitespace-nowrap border-b border-[#222]",
          active ? "bg-[#3a3a3a] text-[#a8a8a8]" : "bg-[#2c2c2c] text-[#7b7b7b]",
        )}
      >
        {children}
      </div>
    </div>
  );
}

const plusIcon = (
  <Glyph size={16} sw={5} className="text-[#767676]">
    <path d="M12 4v16M4 12h16" />
  </Glyph>
);

const commentPaths = (
  <>
    <path d="M4 2h14l2 2v18l-5-3H4L3 17V3z" />
    <path d="M7 7h9M7 11h9M7 15h9" />
  </>
);

function ProToolsRulers() {
  return (
    <div>
      <RulerRow label="Bars|Beats">
        {[1, 9, 17, 25, 33].map((n) => (
          <span key={n} className="w-[187px] shrink-0 pl-[9px] pt-[2px]">
            {n}
          </span>
        ))}
      </RulerRow>
      <RulerRow
        label="Min:Secs"
        active
        icon={
          <>
            <svg width="26" height="20" viewBox="0 0 26 20" fill="none" stroke="#b4b4b4" strokeWidth="2">
              <path d="M1 1h24v18H1zM1 7h24M1 13h24" />
              <path d="M1 1h24v6H1z" fill="#777" />
            </svg>
            <Caret className="-mt-3 ml-1" />
          </>
        }
      >
        {["0:00", "0:10", "0:20", "0:30", "0:40", "0:50", "1:00", "1:10"].map((t, i) => (
          <span
            key={t}
            className={cn(
              "h-full w-[117.200px] shrink-0 border-r-2 border-[#2c2c2c] pl-[6px] pt-[5px] leading-6",
              i === 0 && "w-[119px] pl-[9px]",
            )}
          >
            {t}
          </span>
        ))}
      </RulerRow>
      <RulerRow label="Samples">
        {[0, 1000000, 2000000, 3000000].map((n) => (
          <span key={n} className="w-[243.600px] shrink-0 pl-[9px] pt-[2px]">
            {n}
          </span>
        ))}
      </RulerRow>
      <RulerRow label="Tempo" icon={<Caret className="ml-[15px] -rotate-90 fill-[#767676]" />} tail={plusIcon}>
        <div className="flex h-full w-full items-center bg-[#2a6445] text-[#7cbf97]">
          <svg width="30" height="30" viewBox="0 0 30 30">
            <path d="M0 2l11 13L0 28z" fill="#e03e28" />
            <ellipse cx="20" cy="23" rx="5.500" ry="4.500" fill="#050505" />
            <path d="M25 23V6" stroke="#050505" strokeWidth="2.200" />
          </svg>
          120
        </div>
      </RulerRow>
      <RulerRow label="Meter" tail={plusIcon}>
        <div className="flex h-full w-full items-center bg-[#265d72] pl-[20px] pt-[1px] text-[#8ec3d6]">
          Default: 4/4
        </div>
      </RulerRow>
      <RulerRow
        label="Markers"
        icon={
          <Glyph size={26} sw={2} className="text-[#d0d0d0]">
            {commentPaths}
          </Glyph>
        }
        tail={
          <>
            <Cell className="h-5 w-6 bg-[#4a4a4a]">
              <span className="size-3 border-2 border-[#aaa]" />
            </Cell>
            {plusIcon}
          </>
        }
      >
        <div className="h-full w-full bg-[#262626]" />
      </RulerRow>
    </div>
  );
}

function HeaderCell({ className, children }: { className?: string; children?: ReactNode }) {
  return <Cell className={cn("mr-1 h-7 shrink-0 bg-[#383838]", className)}>{children}</Cell>;
}

function SmallButton({ className, children }: { className?: string; children: ReactNode }) {
  return (
    <Cell
      className={cn(
        "h-[30px] rounded-[3px] border-t border-[#6c6c6c] bg-gradient-to-b from-[#5a5a5a] to-[#474747] text-[20px] font-bold text-[#d2d2d2]",
        className,
      )}
    >
      {children}
    </Cell>
  );
}

function RedTarget() {
  return (
    <Cell className="size-8 rounded-[4px] border-2 border-[#d2685e] bg-[#cf2a1c]">
      <Cell className="size-[20px] rounded-[3px] bg-[#f3a79f]">
        <span className="block size-3 border-[3px] border-[#a83028] bg-[#f3b8b1]" />
      </Cell>
    </Cell>
  );
}

// loudness of each stretch inside the audio clip
const clipLevels: Segment[] = [
  [0, 18, 10],
  [18, 42, 10],
  [42, 66, 10],
  [66, 90, 10],
  [90, 112, 18],
  [112, 136, 15.5],
  [136, 162, 15],
  [162, 184, 15.5],
  [184, 208, 18],
  [208, 230, 15],
  [230, 277, 15.5],
  [277, 300, 24],
  [300, 322, 21],
  [322, 372, 23.5],
  [372, 394, 17],
  [394, 418, 15],
  [418, 464, 15],
  [464, 486, 21],
  [486, 512, 24],
  [512, 535, 24],
  [535, 558, 22],
  [558, 582, 22],
  [582, 606, 16],
  [606, 630, 20],
  [630, 652, 24],
  [652, 672, 21],
];

function envelopePath(mid: number, end: number) {
  const pts: [number, number][] = [];
  for (const [from, to, amp] of clipLevels) {
    if (from > end) break;
    pts.push([from, 4]);
    for (let x = from + 2; x < to - 1; x += 3) {
      const n = amp > 10 ? 0.82 + 0.25 * noise(x) : 1;
      pts.push([x, amp * n]);
    }
  }
  if (end > 672) pts.push([676, 14], [684, 10], [690, 5], [697, 0.5]);
  const top = pts.map(([x, a]) => `${x} ${(mid - a).toFixed(1)}`).join("L");
  const bottom = [...pts].reverse().map(([x, a]) => `${x} ${(mid + a * 0.95).toFixed(1)}`).join("L");
  return `M${top}L${bottom}z`;
}

function FaderIcon() {
  return (
    <svg width="12" height="20" viewBox="0 0 12 20" fill="none" stroke="#d8d8d8" strokeWidth="2">
      <path d="M6 0v6M6 13v7M2 6h8v6H2z" />
    </svg>
  );
}

function Clip({ width, name, gain }: { width: number; name: string; gain?: boolean }) {
  const lines = Array.from({ length: Math.floor(width / 11.72) }, (_, i) => (i + 1) * 11.72 + (gain ? -1 : -5));
  return (
    <div className="relative h-[186px] shrink-0 overflow-hidden bg-[#263a46]" style={{ width }}>
      <svg width={width} height="186" className="block">
        {lines.map((x) => (
          <path key={x} d={`M${x} 0V186`} stroke="#465c69" strokeWidth="1.800" />
        ))}
        <path d="M0 92H800" stroke="#4c626f" strokeWidth="2" />
        <g transform="translate(0 47) scale(1 0.68)">
          <path d={envelopePath(0, width)} fill="#5893bb" stroke="#86b4d2" strokeWidth="0.800" />
        </g>
        <g transform="translate(0 139) scale(1 0.68)">
          <path d={envelopePath(0, width)} fill="#5893bb" stroke="#86b4d2" strokeWidth="0.800" />
        </g>
      </svg>
      <span className="absolute left-[4px] top-[2px] whitespace-nowrap rounded bg-[#1b2932]/85 pl-[2px] pr-[5px] text-[20px] font-bold leading-[25px] tracking-[0.003em] text-[#e4e4e4]">
        {name}
      </span>
      {gain ? (
        <span className="absolute bottom-[6px] left-[8px] flex h-[26px] items-center gap-[11px] rounded bg-[#17222a] px-[2px] text-[20px] font-bold text-[#dedede]">
          <FaderIcon />0 dB
        </span>
      ) : null}
    </div>
  );
}

function TrackControls() {
  return (
    <div className="flex w-[284px] shrink-0 bg-[#2b2b2b]">
      <div className="flex w-[28px] flex-col items-center justify-between bg-[#1d3768] pb-[9px] pt-[3px]">
        <Cell className="size-[21px] rounded-full bg-[#8c9dbd]">
          <Caret className="fill-[#142648]" />
        </Cell>
        <svg width="20" height="20" viewBox="0 0 20 20">
          <rect width="20" height="20" rx="2" fill="#9aa9c6" />
          <path d="m5 5 10 10" stroke="#1d3768" strokeWidth="2" />
          <circle cx="5" cy="5" r="3" fill="none" stroke="#1d3768" strokeWidth="1.800" />
          <circle cx="15" cy="15" r="3" fill="none" stroke="#1d3768" strokeWidth="1.800" />
        </svg>
      </div>
      <div className="w-[222px] pl-[2px] pt-[2px]">
        <div className="flex h-[30px]">
          <Cell className="w-[196px] bg-[#d2d2d2] text-[24px] font-bold text-[#111]">Audio 1</Cell>
          <Cell className="w-[24px] bg-[#1d1d1d]">
            <Caret className="-mt-3 ml-1" />
          </Cell>
        </div>
        <div className="ml-4 mt-[9px] flex gap-[20px]">
          <SmallButton className="w-8 border-[#5b4140] from-[#5c4442] to-[#2f2120]">
            <Dot className="size-4 bg-[#ddd]" />
          </SmallButton>
          {["I", "S", "M"].map((letter) => (
            <SmallButton key={letter} className="w-8 text-[22px] text-white">
              {letter}
            </SmallButton>
          ))}
        </div>
        <div className="ml-[6px] mt-[9px]">
          <SmallButton className="w-[206px]">
            <span className="flex-1 pl-2 text-center">waveform</span>
            <Caret className="-mt-3 mr-1" />
          </SmallButton>
        </div>
        <div className="ml-[6px] mt-[6px] flex gap-[6px]">
          <SmallButton className="w-[22px]">✱</SmallButton>
          <SmallButton className="w-[58px]">dyn</SmallButton>
          <SmallButton className="w-[114px] text-[#4fa55f]">
            <span className="flex-1 pl-1 text-center">read</span>
            <Caret className="-mt-3 mr-1" />
          </SmallButton>
        </div>
        <div className="ml-[6px] mt-[6px] flex items-center gap-[10px]">
          <SmallButton className="w-[22px]">
            <svg width="18" height="22" viewBox="0 0 18 22">
              <path d="M7 2h4l5 18H2z" fill="#54b83c" />
              <path d="m9 12 5-9" stroke="#d9f0d2" strokeWidth="2" />
            </svg>
          </SmallButton>
          <svg width="14" height="18" viewBox="0 0 14 18" fill="#d5d5d5">
            <path d="M6 0h2v9l6 9H0l6-9z" />
          </svg>
        </div>
      </div>
      <div className="ml-[7px] mt-[3px] flex h-[183px] w-[25px] justify-between bg-black p-[2px]">
        {[0, 1].map((side) => (
          <div key={side} className="flex w-[10px] flex-col">
            <div className="h-2 bg-[#3d0d0a]" />
            <div className="h-[30px] bg-[#27260f]" />
            <div className="h-[2px] bg-[#86c451]" />
            <div className={cn("bg-[#27260f]", side ? "h-[4px]" : "h-[2px]")} />
            <div className="h-[36px] bg-[#8df251]" />
            <div className="flex-1 bg-[#4da32f]" />
          </div>
        ))}
      </div>
    </div>
  );
}

function EditTrackRow() {
  return (
    <div className="flex h-[190px] border-b-2 border-black">
      <TrackControls />
      <div className="ml-1 w-[146px] shrink-0 bg-[#2c2c2c] pl-[6px] pt-2">
        <div className="flex h-[30px] w-[135px] rounded-[3px] bg-[#b2b2b2] text-[18px] font-bold text-[#161616]">
          <Cell className="w-[22px] border-r-2 border-[#858585]">
            <Dot className="size-[9px] bg-[#e8e8e8]" />
          </Cell>
          <Cell className="flex-1 whitespace-nowrap tracking-[-0.02em]">Sorc-NxsI/O</Cell>
        </div>
        {[0, 1, 2, 3].map((slot) => (
          <div key={slot} className="mr-[6px] mt-[6px] flex h-[30px] items-center bg-[#282828] pb-1 pl-[6px]">
            <Dot className="size-[8px] bg-[#a7a7a7]" />
          </div>
        ))}
      </div>
      <div className="ml-1 w-[146px] shrink-0 bg-[#2c2c2c] pl-3 pt-[6px] text-[20px] font-bold leading-9 text-[#c9c9c9]">
        {["a", "b", "c", "d"].map((send) => (
          <div key={send}>{send}</div>
        ))}
      </div>
      <div className="ml-1 w-[166px] shrink-0 bg-[#2c2c2c] pl-[6px] pt-2">
        <SmallButton className="w-[154px]">
          <span className="flex-1 whitespace-nowrap pl-3 text-center">no input</span>
          <Caret className="-mt-3 mr-1" />
        </SmallButton>
        <SmallButton className="mt-[6px] w-[154px]">
          <span className="flex-1 text-center">Bus 1-2</span>
          <span className="flex h-full w-[21px] items-center justify-center border-l-2 border-[#333]">
            <FaderIcon />
          </span>
        </SmallButton>
        <div className="ml-[4px] mt-[16px] h-[96px] w-[146px] bg-black px-[8px] pt-[5px] text-[19px] font-bold leading-[22px] text-[#6fcf83]">
          <div className="flex justify-between border-b-2 border-[#222]">
            <span>vol</span>
            <span>0.0</span>
          </div>
          <div className="flex justify-between">
            <span>◂100</span>
            <span>100▸</span>
          </div>
        </div>
      </div>
      <div className="ml-1 flex w-10 shrink-0 flex-col items-center bg-[#2c2c2c] pt-[7px]">
        <RedTarget />
        <Cell className="mt-2 h-[29px] w-[26px] rounded bg-[#4a4a4a]">
          <Glyph size={22} sw={2} className="text-[#c5c5c5]">
            {commentPaths}
          </Glyph>
        </Cell>
        <Cell className="mt-[7px] h-[28px] w-[26px] rounded bg-[#4f4f4f]">
          <Glyph size={20} sw={4} className="text-[#e2e2e2]">
            <path d="M12 4v16M4 12h16" />
          </Glyph>
        </Cell>
      </div>
      <div className="ml-1 w-7 shrink-0 bg-[#444]">
        <svg width="28" height="188" className="block">
          {Array.from({ length: 19 }, (_, i) => (
            <path key={i} d={`M${i % 4 === 0 ? 10 : 17} ${9 + i * 9.8}H28`} stroke="#777" strokeWidth="2.500" />
          ))}
        </svg>
      </div>
      <div className="flex flex-1 gap-[3px] overflow-hidden bg-[#070707] pl-[5px] pt-[2px]">
        <Clip width={698} name="file_example_WAV_10MG-03" />
        <Clip width={133} name="file_example_WAV" gain />
      </div>
    </div>
  );
}

function ProToolsWindow() {
  const ticks = Array.from({ length: 72 }, (_, i) => i * 11.72);
  return (
    <section className="absolute left-0 top-[588px] h-[1280px] w-[1889px] bg-black">
      <div className="h-full overflow-hidden rounded-tl-[20px] border-l-2 border-t-2 border-[#4b4b4b] bg-black font-['Liberation_Sans',Arial,sans-serif]">
        <div className="flex h-[56px] items-center border-b-2 border-black bg-[#1a1a1a]">
          <div className="flex w-[1645px] gap-4 pl-[14px]">
            <Cell className="size-6 rounded-full bg-[#3c3c3c]">
              <Dot className="size-2 bg-[#1a1a1a]" />
            </Cell>
            <Dot className="size-6 bg-[#3c3c3c]" />
            <Dot className="size-6 bg-[#3c3c3c]" />
          </div>
          <svg width="25" height="32" viewBox="0 0 25 32" className="-mt-1">
            <path d="M0 0h18l7 8v24H0z" fill="#2b2d30" />
            <path d="M17 0v9h8z" fill="#8b8b8b" />
            <circle cx="12.500" cy="13" r="8" fill="none" stroke="#2f79a8" strokeWidth="1.800" />
            <path d="m8 18 4.500-10L17 18" fill="none" stroke="#2f8bc4" strokeWidth="2.400" />
            <path d="M3 27h19" stroke="#777" strokeWidth="3" strokeDasharray="2 1" />
          </svg>
          <span className="-mt-[3px] ml-3 font-['Inter',sans-serif] text-[26px] font-bold tracking-[-0.005em] text-[#a6a6a6]">
            Edit: Test
          </span>
        </div>
        <ProToolsToolbar />
        <div className="flex h-[1058px] pl-[6px] pt-2">
          <TrackList />
          <div className="relative ml-[10px] w-[1669px]">
            <div className="flex h-[86px] items-start bg-[#282828] pl-[6px] pt-[4px]">
              <div className="h-[3px] w-[1541px] bg-[#5284ab]" />
              <div className="ml-[2px] h-[5px] flex-1 bg-[#35607f]" />
            </div>
            <div className="h-2 bg-black" />
            <ProToolsRulers />
            <div className="flex bg-black text-[18px] font-bold text-[#dcdcdc]">
              <div className="flex w-[830px] py-1">
                <HeaderCell className="w-[284px] justify-between pl-1 pr-[6px]">
                  <span className="flex">
                    <svg width="26" height="20" viewBox="0 0 26 20" fill="none" stroke="#b4b4b4" strokeWidth="2">
                      <path d="M1 1h24v18H1zM6 1v18M11 1v18M15 1v18M20 1v18" />
                    </svg>
                    <Caret className="ml-1" />
                  </span>
                  <span className="flex items-center">
                    <svg width="20" height="20" viewBox="0 0 22 20">
                      <path d="M10 1a9 9 0 0 0 0 18z" fill="#57a8ef" />
                      <path d="M13 1a9 9 0 0 1 0 18c-3-4-3-14 0-18z" fill="#57a8ef" />
                      <path d="m6 4 6 13" stroke="#234a6b" strokeWidth="2" />
                    </svg>
                    <Caret className="-mt-2 ml-[2px]" />
                  </span>
                </HeaderCell>
                <HeaderCell className="w-[146px]">INSERTS A-E</HeaderCell>
                <HeaderCell className="w-[146px]">SENDS A-E</HeaderCell>
                <HeaderCell className="w-[166px]">I / O</HeaderCell>
                <HeaderCell className="w-10">
                  <svg width="18" height="20" viewBox="0 0 18 20">
                    <path d="M1 1h16v11l-8 8-8-8z" fill="#efc53c" />
                  </svg>
                </HeaderCell>
                <HeaderCell className="mr-0 w-7" />
              </div>
              <svg width="839" height="33" className="mt-[2px] bg-[#292929]">
                {ticks.map((x) => (
                  <path key={x} d={`M${x + 1} 0V30`} stroke="#171717" strokeWidth="2" />
                ))}
              </svg>
            </div>
            <EditTrackRow />
            <div className="flex h-[526px]">
              <div className="w-[830px] bg-[#242424]" />
              <div className="flex-1 border-t-2 border-[#474747] bg-[#282828]" />
            </div>
            {/* edit cursor */}
            <div className="absolute left-[1024px] top-[94px] h-[239px] w-[2px] bg-[#b8392a]" />
          </div>
        </div>
      </div>
    </section>
  );
}

/* ---------- plug-in window ---------- */

function DarkSelect({ label, className }: { label: string; className?: string }) {
  return (
    <Cell className={cn("h-8 rounded border border-[#3d3d3d] bg-[#262626]", className)}>
      <span className="flex-1 whitespace-nowrap pt-[1px] text-center">{label}</span>
      <Caret className="-mt-3 mr-1 fill-[#8c8c8c]" />
    </Cell>
  );
}

const copyIcon = (
  <svg width="22" height="20" viewBox="0 0 22 20" fill="none" stroke="#eee" strokeWidth="2">
    <path d="M1 1h13v8H1z" />
    <path d="M7 8h13v10H7z" fill="#777" />
    <path d="M1 2h13M7 9h13" strokeWidth="3" />
  </svg>
);

function FlowArrow({ back }: { back?: boolean }) {
  return (
    <svg width="54" height="20" viewBox="0 0 54 20" className={cn("drop-shadow-[0_0_4px_#7aa843]", back && "rotate-180")}>
      <path d="M0 7.500h23V1l14 6.500h17v5H37L23 19v-6.500H0z" fill="#9ccb57" />
    </svg>
  );
}

function SideButton({ className, children }: { className?: string; children: ReactNode }) {
  return (
    <Cell className={cn("h-[33px] w-[137px] whitespace-nowrap rounded-lg bg-[#3c424b] text-[14px] tracking-[-0.03em] text-[#b9bdc3]", className)}>
      {children}
    </Cell>
  );
}

const scale = ["–inf", "–80", "–60", "–40", "–30", "–24", "–20", "–16", "–12", "–9", "–6", "–3", "–1", "–0"];

function ChannelRow({ mode, device, className }: { mode: string; device: string; className?: string }) {
  return (
    <div className={cn("flex items-center", className)}>
      <div className="flex h-[38px] w-[134px] items-center justify-between rounded border border-[#292c35] bg-[#2f333e] pl-[18px] pr-[10px] text-[21px] tracking-[-0.02em] text-[#aeb2b9]">
        {mode}
        <ChevronDown size={24} className="text-white" />
      </div>
      <div className="-mt-[4px] ml-[33px] w-[394px] whitespace-nowrap text-[22px] font-medium tracking-[-0.02em] text-white">
        {device}
      </div>
      <div className="relative flex h-[39px] w-[39px] items-center justify-center rounded-[5px] border-2 border-white text-[23px] font-bold text-white">
        M
        <span className="absolute -bottom-[3px] -right-[3px] flex size-3 items-center justify-center rounded-full border border-white bg-[#30343f]">
          <ChevronDown size={8} strokeWidth={3} />
        </span>
      </div>
    </div>
  );
}

function MeterStripes() {
  return (
    <div className="pointer-events-none absolute inset-0 bg-[repeating-linear-gradient(90deg,transparent_0_7px,rgba(0,0,0,0.13)_7px_9px)]" />
  );
}

function PluginWindow() {
  return (
    <section className="absolute left-[668px] top-[1290px] h-[463px] w-[906px] overflow-hidden rounded-[18px] border-2 border-[#5a5f62] bg-[#252c32] font-['Liberation_Sans',Arial,sans-serif] shadow-[0_20px_50px_rgba(0,0,0,0.45)]">
      <div className="flex h-[36px] items-center gap-3 bg-[#434343] pl-[8px]">
        <Dot className="size-[18px] bg-[#ed6a5f]" />
        <Dot className="size-[18px] bg-[#f5bf4f]" />
      </div>
      <div className="flex h-[120px] bg-gradient-to-b from-[#2a2a2a] via-[#323232] to-[#343434] text-[18px] font-bold text-[#b3b3b3]">
        <div className="w-[268px] border-r-2 border-[#262626] pl-[13px]">
          <div className="flex h-[42px] items-center pb-[4px] pl-[3px] text-[21px] text-[#c0c0c0]">Track</div>
          <div className="flex gap-1">
            <DarkSelect label="Audio 1" className="w-[195px]" />
            <DarkSelect label="a" className="w-[46px]" />
          </div>
          <DarkSelect label="Source-Nexus I/O" className="mt-1 w-[245px]" />
        </div>
        <div className="w-[243px] border-r-2 border-[#262626] pl-[10px]">
          <div className="flex h-[42px] items-center justify-between pb-[4px] pl-[4px] pr-[9px] text-[21px] text-[#c0c0c0]">
            Preset
            <Cell className="size-5 rounded-full bg-[#9b9b9b]">
              <Caret className="fill-[#111]" />
            </Cell>
          </div>
          <DarkSelect label="<factory default>" className="w-[223px]" />
          <div className="mt-1 flex h-8 items-center">
            <Cell className="h-[29px] w-[31px] bg-[#4a4a4a]">-</Cell>
            <Cell className="ml-[2px] h-[29px] w-[28px] bg-[#4a4a4a]">+</Cell>
            <Cell className="ml-[2px] h-[29px] w-[32px] rounded-r bg-[#636363]">{copyIcon}</Cell>
            <Cell className="ml-[8px] h-[27px] w-[113px] bg-[#464646] text-white">COMPARE</Cell>
          </div>
        </div>
        <div className="w-[85px] border-r-2 border-[#262626] pl-[13px]">
          <div className="flex h-[42px] items-center pb-[4px] pl-[5px] text-[21px] text-[#c0c0c0]">Auto</div>
          <Cell className="mt-[1px] h-[30px] w-[58px] rounded bg-[#5d5d5d]">{copyIcon}</Cell>
          <Cell className="ml-[1px] mt-[8px] h-[27px] w-[55px] bg-[#5a5a5a] tracking-tight text-white">SAFE</Cell>
        </div>
        <div className="w-[259px] border-r-2 border-[#262626] pl-[14px] pt-[44px]">
          <Cell className="h-[27px] w-[94px] bg-[#555] tracking-tight text-white">BYPASS</Cell>
          <Cell className="mt-[7px] h-[31px] w-[95px] bg-[#3b3b3b] text-[#e5e5e5]">Native</Cell>
        </div>
        <div className="pl-[8px] pt-[41px]">
          <RedTarget />
        </div>
      </div>

      <div className="flex h-[303px] font-['Noto_Sans',sans-serif]">
        <div className="w-[162px] pl-[24px] pt-[16px]">
          <div className="w-[126px] text-center text-[17px] leading-[19px] tracking-[-0.01em] text-[#e6e6e6]">
            <div className="flex items-center justify-center">
              S<Dot className="size-3 bg-[#a4d65e]" />
              URCE
            </div>
            ELEMENTS
          </div>
          <SideButton className="mt-[14px]">PLUGIN INPUT</SideButton>
          <div className="ml-[54px] h-[39px] w-5 bg-[#1f252b]" />
          <SideButton className="h-[36px] border-2 border-[#86a9b8] text-[16px] text-[#c4e27a]">PASS THRU</SideButton>
          <div className="ml-[54px] h-[38px] w-5 bg-[#1f252b]" />
          <SideButton>PLUGIN OUTPUT</SideButton>
          <div className="mt-[12px] w-[138px] text-center text-[15px] leading-6 tracking-[-0.03em] text-[#8d9297]">
            version: 1.5.4.314
          </div>
        </div>
        <div className="w-[56px] pt-[75px]">
          <FlowArrow />
          <div className="h-[118px]" />
          <FlowArrow back />
        </div>
        <div className="mt-[17px] h-[272px] w-[666px] rounded-xl border-4 border-[#2f343c] bg-[#262c33] px-[7px] pt-[9px]">
          <div className="h-[246px] bg-[#30343f] pt-[10px]">
            <ChannelRow mode="SEND" device="Source–Nexus A (ch 1&2)" className="ml-[22px]" />
            <div className="relative ml-[23px] mt-[12px] h-[44px] w-[602px] overflow-hidden rounded-md bg-gradient-to-b from-[#2b2e35] via-[#464a52] to-[#2b2e35]">
              <MeterStripes />
            </div>
            <div className="ml-[-5px] mt-[2px] flex h-[33px] text-[15px] leading-[23px] text-[#a3a7ae]">
              {scale.map((s, i) => (
                <div key={s} className="flex w-[45.100px] flex-col items-center justify-between">
                  <span className={cn("ml-[4px] h-1 w-[2px]", i > 0 && "bg-[#9a9ea5]")} />
                  <span>{s}</span>
                  <span className={cn("ml-[4px] h-1 w-[2px]", i > 0 && "bg-[#9a9ea5]")} />
                </div>
              ))}
            </div>
            <div className="relative ml-[23px] mt-[2px] h-[44px] w-[602px] overflow-hidden rounded-md bg-gradient-to-b from-[#2b2e35] via-[#464a52] to-[#2b2e35]">
              {[0, 1].map((ch) => (
                <div key={ch} className={cn("flex h-[19px]", ch ? "mt-1" : "mt-[1px]")}>
                  <div className="ml-[1px] w-[357px] bg-[linear-gradient(90deg,#a5cf62_0%,#9bc65f_40%,#86ad58_62%,#b0df72_76%,#b4e173_100%)]" />
                  <div className={cn("bg-[#ebe86c]", ch ? "w-[32px]" : "w-[38px]")} />
                  <div className={cn("w-1 bg-[#f0ec6e]", ch ? "ml-[8px]" : "ml-[9px]")} />
                </div>
              ))}
              <MeterStripes />
            </div>
            <ChannelRow mode="RECV" device="Source–Nexus B (ch 1&2)" className="ml-[22px] mt-[10px]" />
          </div>
        </div>
      </div>
    </section>
  );
}

export default function App() {
  return (
    <main className="relative h-[1940px] w-[3566px] overflow-hidden bg-white font-['Inter',sans-serif]">
      <LogicWindow />
      <SettingsWindow />
      <ProToolsWindow />
      <PluginWindow />
    </main>
  );
}
